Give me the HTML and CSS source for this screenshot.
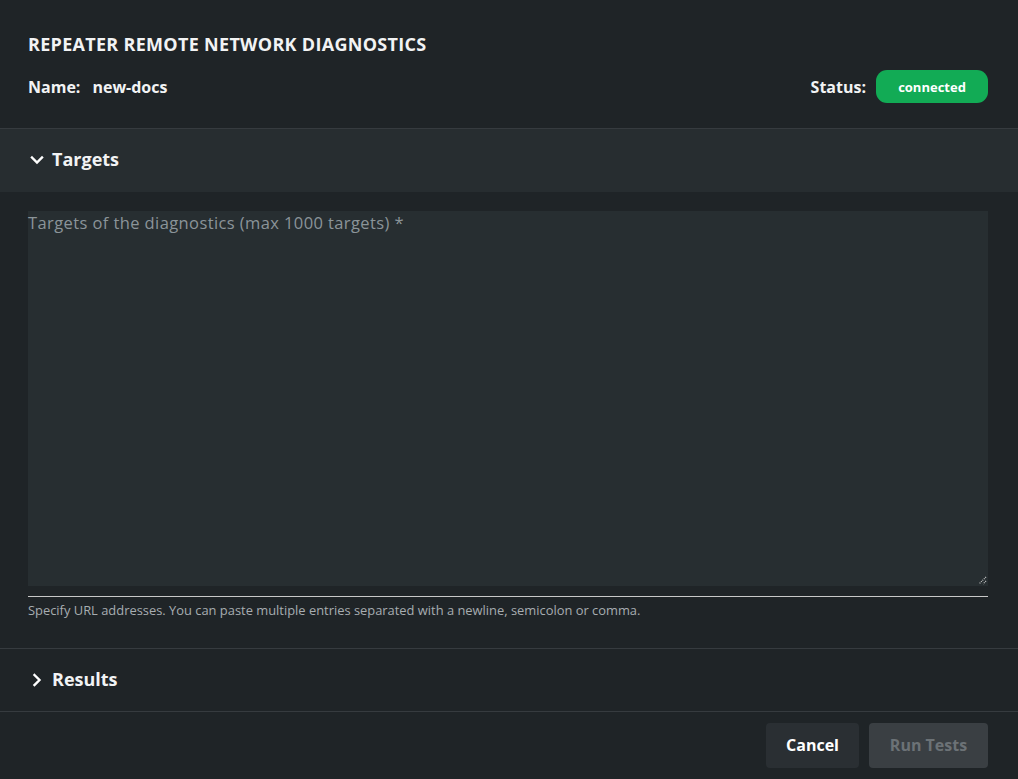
FILE: index.html
```html
<!DOCTYPE html>
<html>
<head>
<meta charset="utf-8">
<link rel="stylesheet" href="styles.css">
</head>
<body>
<div class="dialog">
  <header class="head">
    <h1 class="title">REPEATER REMOTE NETWORK DIAGNOSTICS</h1>
    <div class="meta">
      <div class="name"><span class="lbl">Name:</span><span class="val">new-docs</span></div>
      <div class="status"><span class="lbl">Status:</span><span class="pill">connected</span></div>
    </div>
  </header>
  <section class="section open">
    <div class="sec-head">
      <svg class="chev" width="14" height="14" viewBox="0 0 14 14"><path d="M2 4.5 L7 9.5 L12 4.5" fill="none" stroke="#fff" stroke-width="2.4" stroke-linecap="square"/></svg>
      <span>Targets</span>
    </div>
    <div class="sec-body">
      <div class="field">
        <div class="textarea">
          <span class="placeholder">Targets of the diagnostics (max 1000 targets) *</span>
          <svg class="grip" width="10" height="10" viewBox="0 0 10 10"><path d="M9 2 L2 9 M9 6 L6 9" stroke="#c8c8c8" stroke-width="1.2" stroke-dasharray="1 1"/></svg>
        </div>
        <div class="underline"></div>
        <p class="help">Specify URL addresses. You can paste multiple entries separated with a newline, semicolon or comma.</p>
      </div>
    </div>
  </section>
  <section class="section">
    <div class="sec-head closed">
      <svg class="chev" width="14" height="14" viewBox="0 0 14 14"><path d="M4.5 2 L9.5 7 L4.5 12" fill="none" stroke="#fff" stroke-width="2.4" stroke-linecap="square"/></svg>
      <span>Results</span>
    </div>
  </section>
  <footer class="foot">
    <button class="btn cancel">Cancel</button>
    <button class="btn run" disabled>Run Tests</button>
  </footer>
</div>
</body>
</html>
```

FILE: styles.css
```css
* { box-sizing: border-box; }
html, body { margin: 0; padding: 0; }
body {
  background: #1f2427;
  font-family: "Open Sans", "Liberation Sans", sans-serif;
  color: #f2f3f4;
  width: 1018px;
  height: 779px;
  overflow: hidden;
}
.dialog { display: flex; flex-direction: column; height: 779px; }
.head { padding: 33px 30px 0 28px; height: 129px; border-bottom: 1px solid #363b3f; }
.title { margin: 0; font-size: 18px; font-weight: 700; line-height: 22px; letter-spacing: 0.3px; }
.meta { display: flex; justify-content: space-between; align-items: center; margin-top: 15px; }
.name, .status { display: flex; align-items: center; font-size: 16px; font-weight: 700; }
.name .lbl { margin-right: 12px; }
.status .lbl { margin-right: 10px; }
.pill {
  background: #12ab55; color: #fff; font-size: 13px; font-weight: 700;
  width: 112px; height: 33px; border-radius: 11px;
  display: flex; align-items: center; justify-content: center;
}
.sec-head {
  height: 63px; display: flex; align-items: center; padding-left: 30px; padding-bottom: 3px;
  font-size: 18px; font-weight: 700; background: #272d30;
}
.sec-head.closed { background: transparent; height: 63px; border-bottom: 1px solid #363b3f; }
.chev { margin-right: 8px; margin-top: 2px; }
.sec-body { padding: 19px 30px 0 28px; height: 457px; border-bottom: 1px solid #363b3f; }
.textarea {
  position: relative; height: 375px; background: #272e31; padding: 0;
}
.placeholder { color: #8b9499; font-size: 16.5px; letter-spacing: 0.4px; }
.grip { position: absolute; right: 1px; bottom: 1px; }
.underline { height: 1px; background: #c8c8c8; margin-top: 10px; }
.help { margin: 4px 0 0 0; font-size: 12.9px; color: #a7adb1; }
.foot { display: flex; justify-content: flex-end; gap: 10px; padding: 11px 30px 0 0; }
.btn {
  font-family: inherit; font-size: 16px; font-weight: 700; border: none; border-radius: 4px;
  height: 45px; padding: 0 20px 2px;
}
.cancel { background: #2a2f33; color: #fff; width: 93px; }
.run { background: #3a3f43; color: #6c7276; width: 119px; }
```
